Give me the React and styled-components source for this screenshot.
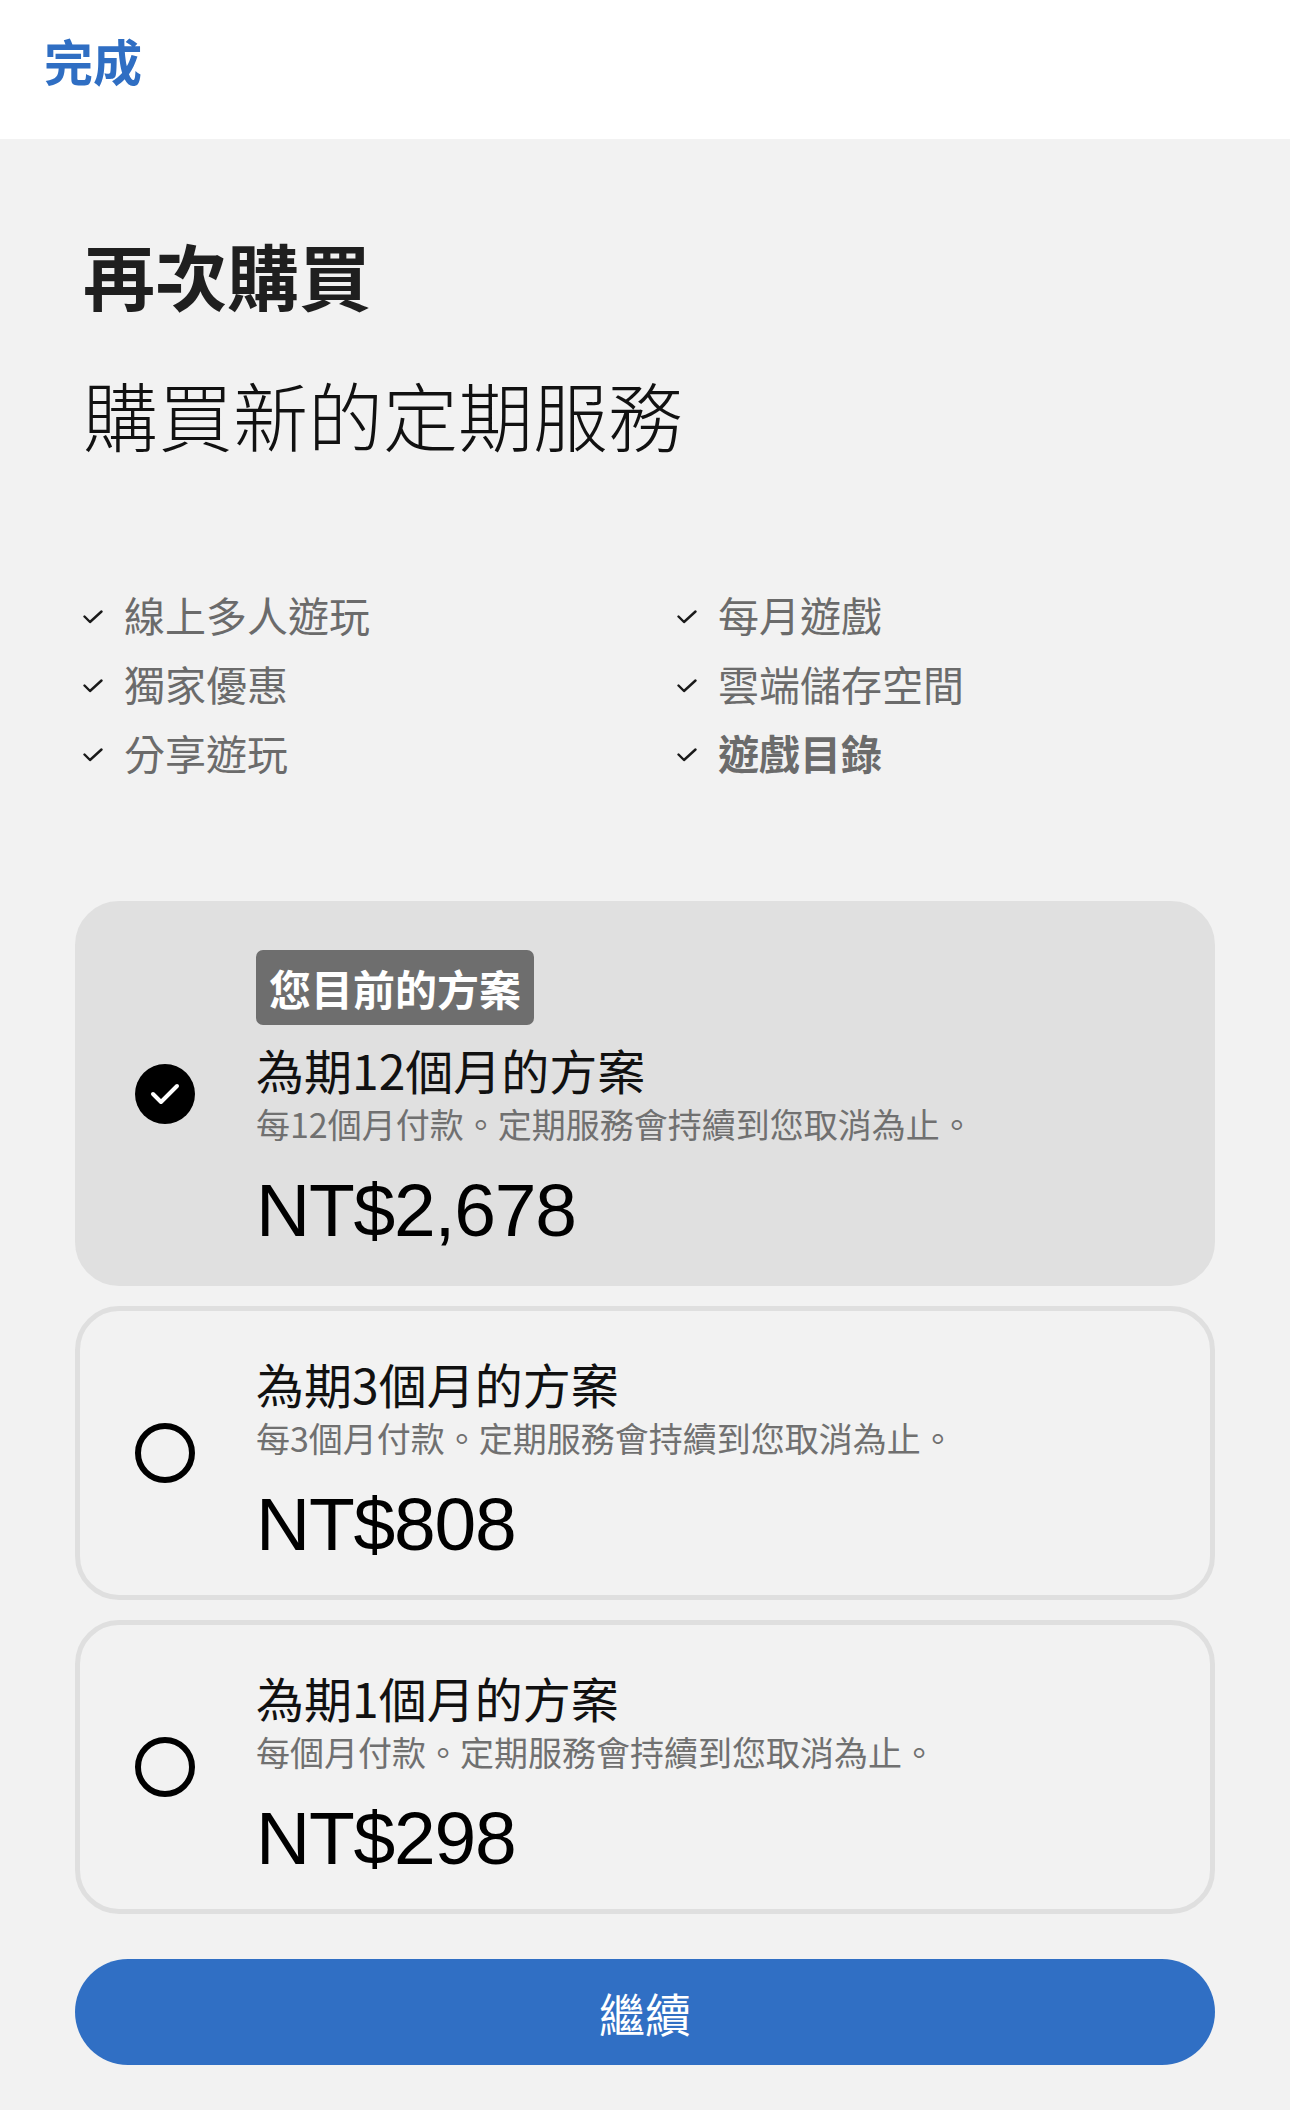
import React, { useState } from "react";
import styled, { createGlobalStyle } from "styled-components";

const GlobalStyle = createGlobalStyle`
  html, body {
    margin: 0;
    padding: 0;
    background: #f2f2f2;
  }
  body {
    font-family: "Noto Sans CJK TC", "Noto Sans", sans-serif;
    color: #111;
  }
  * { box-sizing: border-box; }
`;

const Page = styled.div`
  width: 1290px;
  min-height: 2110px;
  background: #f2f2f2;
  display: flex;
  flex-direction: column;
`;

const Header = styled.header`
  height: 139px;
  background: #ffffff;
  padding: 30px 44px 0;
`;

const DoneButton = styled.button`
  border: 0;
  background: none;
  padding: 0;
  font-family: inherit;
  font-size: 49px;
  line-height: 60px;
  font-weight: 700;
  color: #2f6ec3;
  cursor: pointer;
`;

const Main = styled.main`
  padding: 92px 75px 44px;
  display: flex;
  flex-direction: column;
`;

const Title = styled.h1`
  margin: 0;
  padding-left: 8px;
  font-size: 72px;
  line-height: 86px;
  font-weight: 700;
  color: #1f1f1f;
`;

const Subtitle = styled.h2`
  margin: 52px 0 0;
  padding-left: 8px;
  font-size: 75px;
  line-height: 90px;
  font-weight: 300;
  color: #111;
`;

const Features = styled.ul`
  list-style: none;
  margin: 121px 0 0;
  padding: 0 0 0 8px;
  display: grid;
  grid-template-columns: 594px 1fr;
  grid-auto-flow: column;
  grid-template-rows: repeat(3, 69px);
`;

const Feature = styled.li`
  display: flex;
  align-items: center;
  gap: 21px;
  font-size: 41px;
  line-height: 69px;
  color: #6b6b6b;
  font-weight: ${(p) => (p.$bold ? 700 : 400)};
`;

const Tick = styled.svg`
  width: 20px;
  height: 14px;
  flex: none;
  margin-top: 4px;
`;

const Plans = styled.div`
  margin-top: 114px;
  display: flex;
  flex-direction: column;
  gap: 20px;
`;

const Card = styled.div`
  display: grid;
  grid-template-columns: 60px 1fr;
  column-gap: 61px;
  align-items: center;
  padding: 31px 40px 31px 55px;
  border-radius: 44px;
  border: 5px solid ${(p) => (p.$selected ? "#e0e0e0" : "#dfdfdf")};
  background: ${(p) => (p.$selected ? "#e0e0e0" : "#f2f2f2")};
  cursor: pointer;
`;

const Radio = styled.div`
  width: 60px;
  height: 60px;
  border-radius: 50%;
  border: ${(p) => (p.$checked ? "0" : "6px solid #000")};
  background: ${(p) => (p.$checked ? "#000" : "transparent")};
  display: flex;
  align-items: center;
  justify-content: center;
`;

const PlanBody = styled.div`
  padding-top: 13px;
  display: flex;
  flex-direction: column;
  align-items: flex-start;
`;

const Badge = styled.span`
  height: 75px;
  padding: 0 13px;
  margin-bottom: 16px;
  border-radius: 7px;
  background: #6e6e6e;
  color: #fff;
  font-size: 42px;
  line-height: 75px;
  font-weight: 700;
`;

const PlanName = styled.div`
  font-size: 48px;
  line-height: 56px;
  color: #111;
`;

const PlanDesc = styled.div`
  margin-top: 5px;
  font-size: 34px;
  line-height: 44px;
  color: #707070;
`;

const Price = styled.div`
  margin-top: 24px;
  font-family: "Liberation Sans", Arial, sans-serif;
  font-size: 75px;
  line-height: 80px;
  letter-spacing: -1.2px;
  color: #000;
`;

const Continue = styled.button`
  margin-top: 45px;
  height: 106px;
  border: 0;
  border-radius: 53px;
  background: #306fc4;
  color: #fff;
  font-family: inherit;
  font-size: 46px;
  font-weight: 400;
  cursor: pointer;
`;

const features = [
  { t: "線上多人遊玩" },
  { t: "獨家優惠" },
  { t: "分享遊玩" },
  { t: "每月遊戲" },
  { t: "雲端儲存空間" },
  { t: "遊戲目錄", bold: true },
];

const plans = [
  {
    id: 12,
    name: "為期12個月的方案",
    desc: "每12個月付款。定期服務會持續到您取消為止。",
    price: "NT$2,678",
    current: true,
  },
  {
    id: 3,
    name: "為期3個月的方案",
    desc: "每3個月付款。定期服務會持續到您取消為止。",
    price: "NT$808",
  },
  {
    id: 1,
    name: "為期1個月的方案",
    desc: "每個月付款。定期服務會持續到您取消為止。",
    price: "NT$298",
  },
];

function CheckTick() {
  return (
    <Tick viewBox="0 0 20 14" fill="none">
      <polyline
        points="1.5,6.5 7,12 18.5,1.5"
        stroke="#1a1a1a"
        strokeWidth="2.4"
        strokeLinecap="round"
        strokeLinejoin="round"
      />
    </Tick>
  );
}

export default function App() {
  const [selected, setSelected] = useState(12);
  return (
    <>
      <GlobalStyle />
      <Page>
        <Header>
          <DoneButton>完成</DoneButton>
        </Header>
        <Main>
          <Title>再次購買</Title>
          <Subtitle>購買新的定期服務</Subtitle>
          <Features>
            {features.map((f) => (
              <Feature key={f.t} $bold={f.bold}>
                <CheckTick />
                {f.t}
              </Feature>
            ))}
          </Features>
          <Plans>
            {plans.map((p) => {
              const isSel = selected === p.id;
              return (
                <Card key={p.id} $selected={isSel} onClick={() => setSelected(p.id)}>
                  <Radio $checked={isSel}>
                    {isSel && (
                      <svg width="32" height="24" viewBox="0 0 32 24" fill="none">
                        <polyline
                          points="4,12 12,20 28,4"
                          stroke="#fff"
                          strokeWidth="4"
                          strokeLinecap="round"
                          strokeLinejoin="round"
                        />
                      </svg>
                    )}
                  </Radio>
                  <PlanBody>
                    {p.current && <Badge>您目前的方案</Badge>}
                    <PlanName>{p.name}</PlanName>
                    <PlanDesc>{p.desc}</PlanDesc>
                    <Price>{p.price}</Price>
                  </PlanBody>
                </Card>
              );
            })}
          </Plans>
          <Continue>繼續</Continue>
        </Main>
      </Page>
    </>
  );
}
